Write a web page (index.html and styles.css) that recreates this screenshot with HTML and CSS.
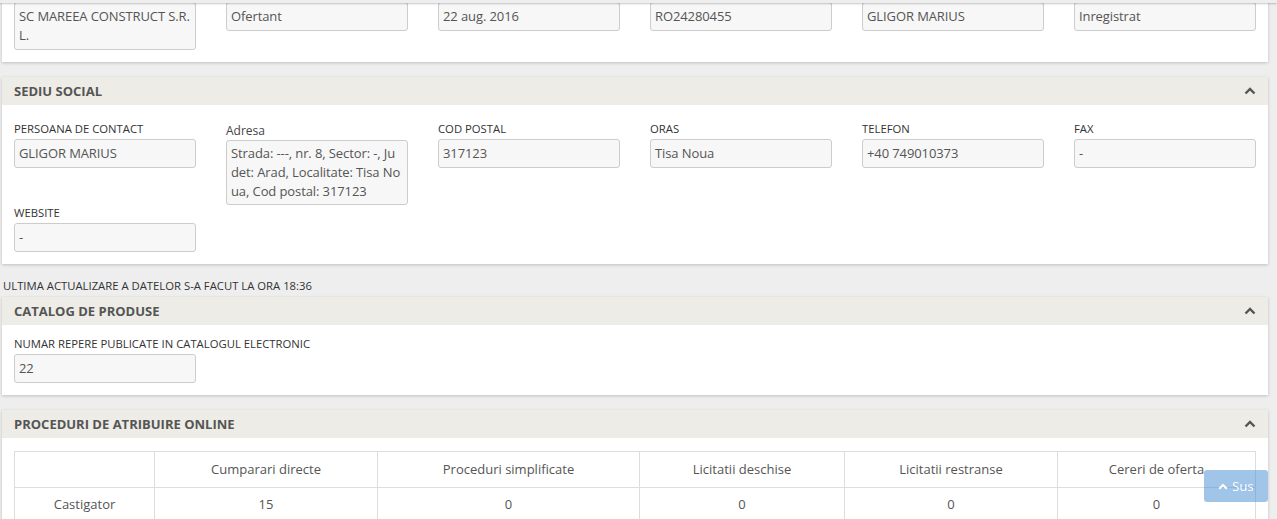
FILE: index.html
```html
<!DOCTYPE html>
<html lang="ro">

<head>
    <meta charset="UTF-8">
    <meta name="viewport" content="width=device-width, initial-scale=1.0">
    <title>Profil operator economic</title>
    <link rel="stylesheet" href="styles.css">
</head>

<body>
    <div class="top-edge"></div>

    <div class="page">
        <!-- Date generale -->
        <div class="panel panel-first">
            <div class="panel-heading">
                <span>Date generale</span>
                <svg class="chevron" width="12" height="8" viewBox="0 0 12 8"><polyline points="1.5,6.5 6,2 10.5,6.5" /></svg>
            </div>
            <div class="panel-body spaced">
                <div class="fields">
                    <div class="field">
                        <label>Denumire</label>
                        <div class="value">SC MAREEA CONSTRUCT S.R.L.</div>
                    </div>
                    <div class="field">
                        <label>Tip</label>
                        <div class="value">Ofertant</div>
                    </div>
                    <div class="field">
                        <label>Data inregistrarii</label>
                        <div class="value">22 aug. 2016</div>
                    </div>
                    <div class="field">
                        <label>Cod fiscal</label>
                        <div class="value">RO24280455</div>
                    </div>
                    <div class="field">
                        <label>Reprezentant legal</label>
                        <div class="value">GLIGOR MARIUS</div>
                    </div>
                    <div class="field">
                        <label>Stare</label>
                        <div class="value">Inregistrat</div>
                    </div>
                </div>
            </div>
        </div>

        <!-- Sediu social -->
        <div class="panel">
            <div class="panel-heading">
                <span>Sediu social</span>
                <svg class="chevron" width="12" height="8" viewBox="0 0 12 8"><polyline points="1.5,6.5 6,2 10.5,6.5" /></svg>
            </div>
            <div class="panel-body spaced">
                <div class="fields">
                    <div class="field">
                        <label>Persoana de contact</label>
                        <div class="value">GLIGOR MARIUS</div>
                    </div>
                    <div class="field">
                        <label class="plain">Adresa</label>
                        <div class="value multi">Strada: ---, nr. 8, Sector: -, Ju<br>det: Arad, Localitate: Tisa No<br>ua, Cod postal: 317123</div>
                    </div>
                    <div class="field">
                        <label>Cod postal</label>
                        <div class="value">317123</div>
                    </div>
                    <div class="field">
                        <label>Oras</label>
                        <div class="value">Tisa Noua</div>
                    </div>
                    <div class="field">
                        <label>Telefon</label>
                        <div class="value">+40 749010373</div>
                    </div>
                    <div class="field">
                        <label>Fax</label>
                        <div class="value">-</div>
                    </div>
                    <div class="field">
                        <label>Website</label>
                        <div class="value">-</div>
                    </div>
                </div>
            </div>
        </div>

        <div class="last-update">Ultima actualizare a datelor s-a facut la ora 18:36</div>

        <!-- Catalog de produse -->
        <div class="panel">
            <div class="panel-heading">
                <span>Catalog de produse</span>
                <svg class="chevron" width="12" height="8" viewBox="0 0 12 8"><polyline points="1.5,6.5 6,2 10.5,6.5" /></svg>
            </div>
            <div class="panel-body">
                <div class="fields">
                    <div class="field wide">
                        <label>Numar repere publicate in catalogul electronic</label>
                        <div class="value">22</div>
                    </div>
                </div>
            </div>
        </div>

        <!-- Proceduri de atribuire online -->
        <div class="panel">
            <div class="panel-heading">
                <span>Proceduri de atribuire online</span>
                <svg class="chevron" width="12" height="8" viewBox="0 0 12 8"><polyline points="1.5,6.5 6,2 10.5,6.5" /></svg>
            </div>
            <div class="panel-body table-body">
                <table class="proc-table">
                    <thead>
                        <tr>
                            <th></th>
                            <th>Cumparari directe</th>
                            <th>Proceduri simplificate</th>
                            <th>Licitatii deschise</th>
                            <th>Licitatii restranse</th>
                            <th>Cereri de oferta</th>
                        </tr>
                    </thead>
                    <tbody>
                        <tr>
                            <td>Castigator</td>
                            <td>15</td>
                            <td>0</td>
                            <td>0</td>
                            <td>0</td>
                            <td>0</td>
                        </tr>
                        <tr>
                            <td>Participant</td>
                            <td>15</td>
                            <td>0</td>
                            <td>0</td>
                            <td>0</td>
                            <td>0</td>
                        </tr>
                    </tbody>
                </table>
            </div>
        </div>
    </div>

    <!-- Buton inapoi sus -->
    <a class="back-top" href="#">
        <svg width="10" height="7" viewBox="0 0 10 7"><polyline points="1.2,5.8 5,2 8.8,5.8" /></svg>
        Sus
    </a>
</body>

</html>
```

FILE: styles.css
```css
body {
    margin: 0;
    background: #eeeeee;
    font-family: "Open Sans", "Liberation Sans", Arial, sans-serif;
    color: #333;
    overflow: hidden;
}

.top-edge {
    position: fixed;
    top: 0;
    left: 0;
    right: 0;
    height: 3px;
    background: #eeeeee;
    box-shadow: 0 1px 2px rgba(0, 0, 0, 0.22);
    z-index: 5;
}

.page {
    padding: 0 9px 0 2px;
}
/* Panels */

.panel {
    background: #fff;
    box-shadow: 0 1px 3px rgba(0, 0, 0, 0.2);
    margin-bottom: 15px;
}

.panel-first {
    margin-top: -60px;
}

.panel-heading {
    display: flex;
    justify-content: space-between;
    align-items: center;
    height: 28px;
    padding: 0 12px;
    background: #edece6;
    font-size: 13px;
    font-weight: 700;
    color: #555;
    text-transform: uppercase;
}

.chevron polyline {
    fill: none;
    stroke: #555;
    stroke-width: 2.4;
}

.panel-body {
    padding: 11px 12px 12px;
}

.panel-body.spaced {
    padding-top: 16px;
}

.panel-body.table-body {
    padding-top: 13px;
    padding-bottom: 12px;
}
/* Fields */

.fields {
    display: grid;
    grid-template-columns: repeat(6, minmax(0, 1fr));
    column-gap: 30px;
}

.field label {
    display: block;
    font-size: 11.3px;
    line-height: 15px;
    margin-bottom: 3px;
    text-transform: uppercase;
    color: #333;
}

.field label.plain {
    font-size: 12px;
    line-height: 17px;
    padding-top: 1px;
    margin-bottom: 1px;
    text-transform: none;
    color: #444;
}

.field.wide label {
    white-space: nowrap;
}

.value {
    border: 1px solid #cccccc;
    border-radius: 3px;
    background: #f7f7f7;
    padding: 4px 3px 4px 4px;
    font-size: 13px;
    line-height: 19px;
    letter-spacing: -0.1px;
    color: #555;
    word-break: break-all;
}

.value.multi {
    padding-top: 3px;
    padding-bottom: 3px;
    white-space: nowrap;
    overflow: hidden;
}

.last-update {
    margin-top: -1px;
    margin-bottom: 4px;
    padding-left: 1px;
    font-size: 11.3px;
    line-height: 15px;
    text-transform: uppercase;
    color: #333;
}
/* Tabel proceduri */

.proc-table {
    width: 100%;
    border-collapse: collapse;
    font-size: 13px;
    color: #555;
}

.proc-table th,
.proc-table td {
    box-sizing: border-box;
    border: 1px solid #dddddd;
    padding: 7px 8px;
    line-height: 19px;
    text-align: center;
    font-weight: 400;
}

.proc-table th {
    padding: 8px;
}

.proc-table th:nth-child(1) {
    width: 140px;
}

.proc-table th:nth-child(2) {
    width: 223px;
}

.proc-table th:nth-child(3) {
    width: 262px;
}

.proc-table th:nth-child(4) {
    width: 205px;
}

.proc-table th:nth-child(5) {
    width: 213px;
}
/* Back to top */

.back-top {
    position: fixed;
    right: 9px;
    bottom: 17px;
    width: 64px;
    height: 32px;
    display: flex;
    align-items: center;
    justify-content: center;
    gap: 4px;
    background: rgba(66, 139, 212, 0.5);
    border-radius: 3px;
    color: #fff;
    font-size: 13px;
    text-decoration: none;
    z-index: 10;
}

.back-top polyline {
    fill: none;
    stroke: #fff;
    stroke-width: 2.2;
}
```
